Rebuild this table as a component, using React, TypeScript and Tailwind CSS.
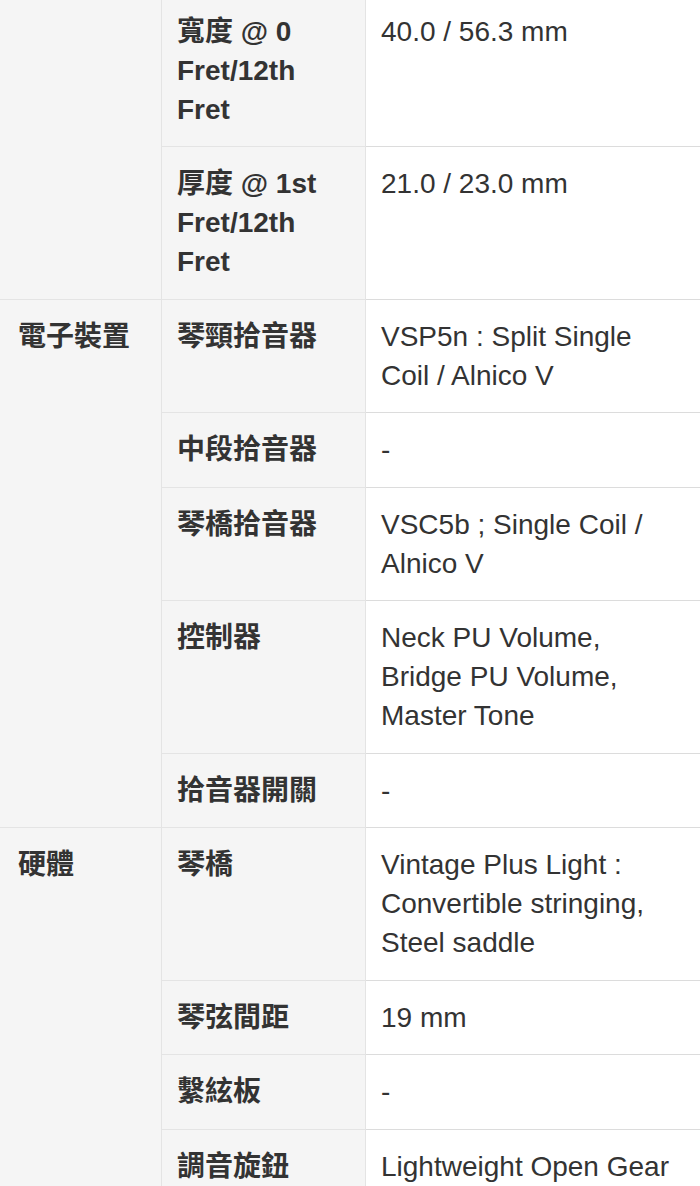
import React from "react";

type Spec = { label: React.ReactNode; value: React.ReactNode };
type Group = { name: string; rows: Spec[] };

const groups: Group[] = [
  {
    name: "",
    rows: [
      { label: <>寬度 @ 0<br />Fret/12th<br />Fret</>, value: "40.0 / 56.3 mm" },
      { label: <>厚度 @ 1st<br />Fret/12th<br />Fret</>, value: "21.0 / 23.0 mm" },
    ],
  },
  {
    name: "電子裝置",
    rows: [
      { label: "琴頸拾音器", value: <>VSP5n : Split Single<br />Coil / Alnico V</> },
      { label: "中段拾音器", value: "-" },
      { label: "琴橋拾音器", value: <>VSC5b ; Single Coil /<br />Alnico V</> },
      { label: "控制器", value: <>Neck PU Volume,<br />Bridge PU Volume,<br />Master Tone</> },
      { label: "拾音器開關", value: "-" },
    ],
  },
  {
    name: "硬體",
    rows: [
      { label: "琴橋", value: <>Vintage Plus Light :<br />Convertible stringing,<br />Steel saddle</> },
      { label: "琴弦間距", value: "19 mm" },
      { label: "繫絃板", value: "-" },
      { label: "調音旋鈕", value: "Lightweight Open Gear" },
    ],
  },
];

export default function App() {
  return (
    <div
      className="w-[700px] h-[1186px] overflow-hidden bg-white text-[#333] text-[28px] leading-[39px]"
      style={{ fontFamily: '"Liberation Sans", Arial, "Noto Sans CJK TC", sans-serif' }}
    >
      <table className="w-[700px] -mt-[6.5px] table-fixed border-separate border-spacing-0">
        <colgroup>
          <col className="w-[162px]" />
          <col className="w-[204px]" />
          <col />
        </colgroup>
        <tbody>
          {groups.map((g, gi) =>
            g.rows.map((r, ri) => (
              <tr key={`${gi}-${ri}`}>
                {ri === 0 && (
                  <td
                    rowSpan={g.rows.length}
                    className="align-top bg-[#f5f5f5] border-t border-r border-[#e4e4e4] pl-[18px] pr-2 py-[17.25px] font-bold"
                  >
                    {g.name}
                  </td>
                )}
                <td className="align-top bg-[#f5f5f5] border-t border-r border-[#e4e4e4] px-[15px] py-[17.25px] font-bold">
                  {r.label}
                </td>
                <td className="align-top bg-white border-t border-[#dcdcdc] px-[15px] py-[17.25px]">
                  {r.value}
                </td>
              </tr>
            ))
          )}
        </tbody>
      </table>
    </div>
  );
}
